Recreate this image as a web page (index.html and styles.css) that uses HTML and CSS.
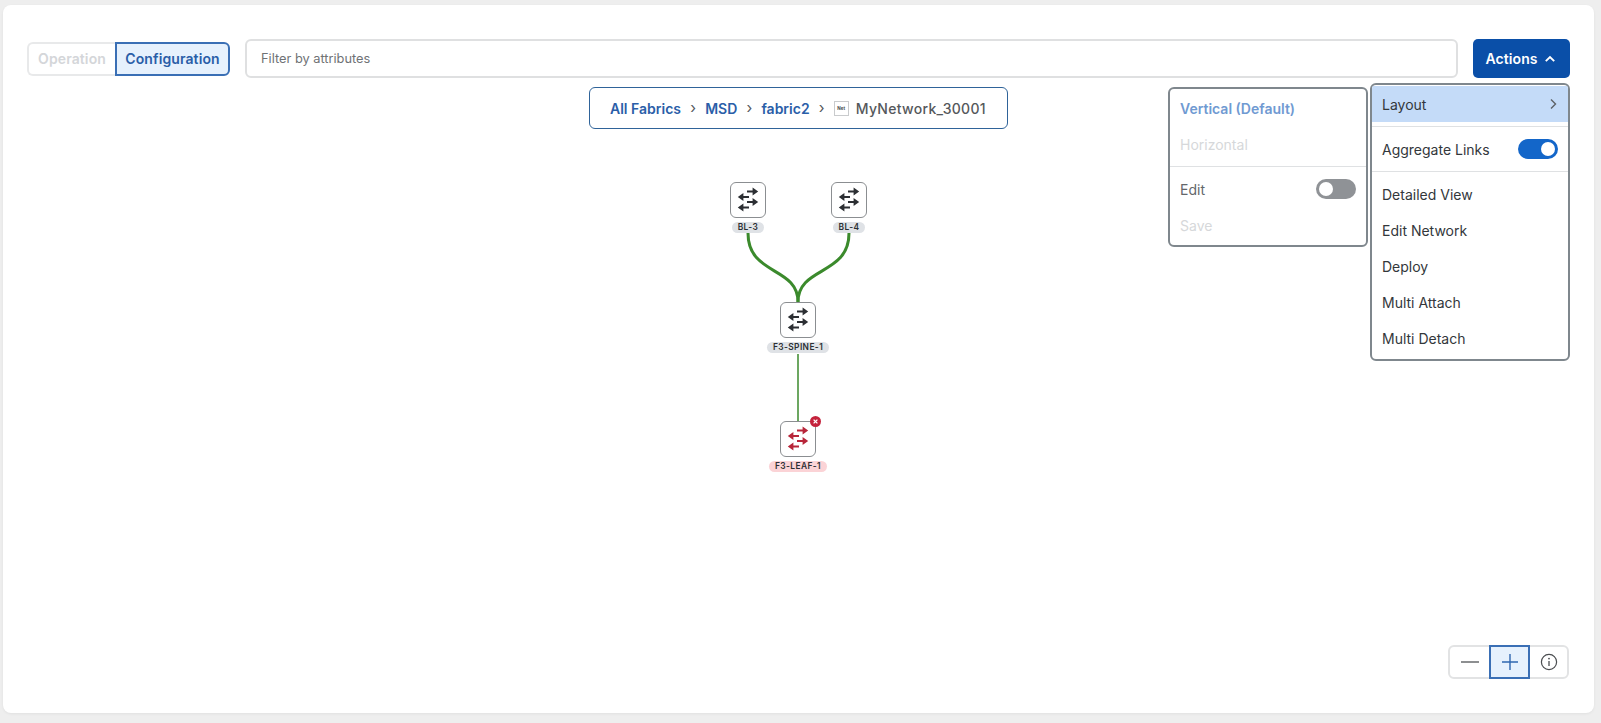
FILE: index.html
```html
<!DOCTYPE html>
<html lang="en">
<head>
<meta charset="utf-8">
<title>MyNetwork_30001</title>
<link rel="stylesheet" href="styles.css">
</head>
<body>
<svg class="defs" width="0" height="0" aria-hidden="true">
  <symbol id="sw" viewBox="0 0 36 36">
    <path d="M17 9.5h7M19 15h-7M17 20h7M19 25.5h-7" fill="none" stroke="currentColor" stroke-width="2.1"/>
    <path d="M22.6 5.4l5.6 4.1-5.6 4.1zM13.4 10.9L7.8 15l5.6 4.1zM22.6 15.9l5.6 4.1-5.6 4.1zM13.4 21.4l-5.6 4.1 5.6 4.1z" fill="currentColor"/>
  </symbol>
</svg>
<main class="panel">
  <header class="toolbar">
    <div class="segment">
      <button class="seg seg-off">Operation</button>
      <button class="seg seg-on">Configuration</button>
    </div>
    <div class="filter">Filter by attributes</div>
    <button class="actions">Actions
      <svg class="caret" width="12" height="12" viewBox="0 0 12 12"><path d="M1.8 8.2L6 4l4.2 4.2" fill="none" stroke="#fff" stroke-width="1.9"/></svg>
    </button>
  </header>
  <section class="canvas">
    <nav class="crumbs">
      <a>All Fabrics</a><span class="sep">›</span><a>MSD</a><span class="sep">›</span><a>fabric2</a><span class="sep">›</span>
      <span class="net">Net</span><span class="current">MyNetwork_30001</span>
    </nav>

    <svg class="edges" width="1601" height="723" viewBox="0 0 1601 723">
      <path class="thick" d="M748 233C748 276 798 266 798 302"/>
      <path class="thick" d="M849 233C849 276 798 266 798 302"/>
      <path class="thin" d="M798 354V422"/>
    </svg>

    <div class="node n-bl3"><div class="box"><svg width="36" height="36"><use href="#sw"/></svg></div><span class="tag">BL-3</span></div>
    <div class="node n-bl4"><div class="box"><svg width="36" height="36"><use href="#sw"/></svg></div><span class="tag">BL-4</span></div>
    <div class="node n-spine"><div class="box"><svg width="36" height="36"><use href="#sw"/></svg></div><span class="tag">F3-SPINE-1</span></div>
    <div class="node n-leaf err"><div class="box"><svg width="36" height="36"><use href="#sw"/></svg>
      <svg class="badge" width="11" height="11" viewBox="0 0 11 11"><circle cx="5.5" cy="5.5" r="5.5" fill="#c4233c"/><path d="M3.6 3.6l3.8 3.8M7.4 3.6l-3.8 3.8" stroke="#fff" stroke-width="1.3"/></svg></div><span class="tag">F3-LEAF-1</span></div>

    <div class="zoomctl">
      <button class="zbtn"><svg width="20" height="20" viewBox="0 0 20 20"><path d="M1 10h18" stroke="#5c5f62" stroke-width="1.4"/></svg></button>
      <button class="zbtn zon"><svg width="20" height="20" viewBox="0 0 20 20"><path d="M2 10h16M10 2v16" stroke="#2f67b0" stroke-width="1.4"/></svg></button>
      <button class="zbtn"><svg width="18" height="18" viewBox="0 0 18 18"><circle cx="9" cy="9" r="7.6" fill="none" stroke="#4a4d50" stroke-width="1.2"/><path d="M9 8v5" stroke="#4a4d50" stroke-width="1.3"/><circle cx="9" cy="5.6" r=".9" fill="#4a4d50"/></svg></button>
    </div>
  </section>

  <aside class="menu sub">
    <div class="item picked">Vertical (Default)</div>
    <div class="item faint">Horizontal</div>
    <hr class="rule rule-sub">
    <div class="item dim">Edit<span class="switch off"></span></div>
    <div class="item faint">Save</div>
  </aside>
  <aside class="menu main-menu">
    <div class="item active">Layout
      <svg width="10" height="12" viewBox="0 0 10 12"><path d="M3 1.5L7.5 6 3 10.5" fill="none" stroke="#5c6166" stroke-width="1.4"/></svg>
    </div>
    <hr class="rule">
    <div class="item">Aggregate Links<span class="switch on"></span></div>
    <hr class="rule">
    <div class="item">Detailed View</div>
    <div class="item">Edit Network</div>
    <div class="item">Deploy</div>
    <div class="item">Multi Attach</div>
    <div class="item">Multi Detach</div>
  </aside>
</main>
</body>
</html>
```
FILE: styles.css
```css
* { box-sizing: border-box; }
html, body { margin: 0; height: 100%; }
body {
  background: #eeeeee;
  padding: 5px 7px 10px 3px;
  font-family: Inter, "Liberation Sans", sans-serif;
  font-size: 14px;
  color: #2b2f33;
  overflow: hidden;
}
.defs { position: absolute; }
button { font-family: inherit; margin: 0; padding: 0; cursor: pointer; }

.panel {
  position: relative;
  height: 708px;
  background: #fff;
  border-radius: 8px;
  box-shadow: 0 1px 3px rgba(0, 0, 0, 0.06);
  display: flex;
  flex-direction: column;
}

.toolbar {
  display: flex;
  align-items: center;
  padding: 34px 24px 0 24px;
  height: 73px;
}
.segment { display: flex; height: 34px; }
.seg { font-size: 14px; font-weight: 600; height: 34px; background: #fff; letter-spacing: 0.1px; }
.seg-off {
  width: 88px;
  color: #d4d6d9;
  border: 2px solid #e8e9ea;
  border-right: 0;
  border-radius: 6px 0 0 6px;
}
.seg-on {
  width: 115px;
  color: #2a5ea8;
  background: #e6f1fd;
  border: 2px solid #3a6fb5;
  border-radius: 0 6px 6px 0;
}
.filter {
  flex: 1;
  height: 39px;
  margin: 0 15px 0 15px;
  border: 2px solid #dfe0e1;
  border-radius: 6px;
  padding-left: 14px;
  display: flex;
  align-items: center;
  font-size: 12.8px;
  color: #6f7275;
}
.actions {
  width: 97px;
  height: 39px;
  background: #0a4fa8;
  color: #fff;
  border: 0;
  border-radius: 5px;
  font-size: 14px;
  font-weight: 600;
  letter-spacing: 0.1px;
  display: flex;
  align-items: center;
  justify-content: center;
  gap: 6px;
  padding-right: 2px;
}

.canvas { position: relative; flex: 1; display: flex; flex-direction: column; align-items: center; padding-top: 9px; }
.crumbs {
  width: 419px;
  height: 42px;
  border: 1px solid #2f6399;
  border-radius: 6px;
  display: flex;
  align-items: center;
  justify-content: flex-start;
  padding-left: 20px;
  font-size: 14px;
  background: #fff;
  position: relative;
  z-index: 1;
}
.crumbs a { color: #2a5ea8; font-weight: 600; }
.sep { color: #55595d; margin: 0 9.2px; font-size: 15px; line-height: 14px; }
.net {
  width: 15px;
  height: 15px;
  border: 1px solid #c9cbcd;
  font-size: 4.5px;
  font-weight: 700;
  display: flex;
  align-items: center;
  justify-content: center;
  margin-right: 7px;
  color: #44484c;
}
.current { color: #55585b; font-weight: 500; letter-spacing: 0.3px; }

.edges { position: absolute; left: -3px; top: -78px; pointer-events: none; }
.edges path { fill: none; stroke: #3b8a2c; }
.thick { stroke-width: 3; }
.thin { stroke-width: 1.5; }

.node {
  position: absolute;
  width: 80px;
  display: flex;
  flex-direction: column;
  align-items: center;
  gap: 4px;
}
.n-bl3 { left: 705px; top: 104px; }
.n-bl4 { left: 806px; top: 104px; }
.n-spine { left: 755px; top: 224px; }
.n-leaf { left: 755px; top: 343px; }
.box {
  position: relative;
  width: 36px;
  height: 36px;
  background: #fff;
  border: 1px solid #8b8e91;
  border-radius: 6px;
  color: #2c2f33;
}
.box > svg:first-child { display: block; margin: -1px; }
.tag {
  font-size: 8.4px;
  font-weight: 600;
  line-height: 11px;
  height: 11px;
  padding: 0 6px;
  background: #dfe2e6;
  border-radius: 6px;
  color: #2c2f33;
  letter-spacing: 0.4px;
  white-space: nowrap;
}
.err .box { color: #b8263a; }
.err .tag { background: #fbd3d6; }
.badge { position: absolute; right: -6px; top: -6px; }

.zoomctl {
  position: absolute;
  right: 25px;
  bottom: 34px;
  display: flex;
  height: 34px;
  width: 121px;
  border: 2px solid #e2e3e4;
  border-radius: 6px;
  background: #fff;
}
.zbtn { flex: 1; background: none; border: 0; display: flex; align-items: center; justify-content: center; }
.zbtn:first-child { flex: none; width: 39px; }
.zon {
  flex: none;
  width: 41px;
  height: 34px;
  margin-top: -2px;
  background: #e6f1fd;
  border: 2px solid #3a6fb5;
}

.menu {
  position: absolute;
  background: #fff;
  border: 2px solid #7f878d;
  border-radius: 6px;
}
.sub { left: 1165px; top: 82px; width: 200px; height: 160px; padding-top: 1px; }
.main-menu { left: 1367px; top: 78px; width: 200px; height: 278px; padding-top: 1px; overflow: hidden; }
.item {
  height: 36px;
  padding: 0 10px;
  display: flex;
  align-items: center;
  justify-content: space-between;
  font-size: 14px;
  color: #33373b;
}
.active { background: #c4dbf8; }
.picked { color: #709ad2; font-weight: 600; }
.faint { color: #d6d8da; }
.dim { color: #63676b; }
.rule { border: 0; border-top: 1px solid #dfe1e3; margin: 4px 0 4px; height: 0; }
.rule-sub { margin: 4px 0 4px; }
.switch { position: relative; width: 40px; height: 20px; border-radius: 10px; }
.switch::after {
  content: "";
  position: absolute;
  top: 3px;
  width: 14px;
  height: 14px;
  border-radius: 50%;
  background: #fff;
}
.on { background: #1366c9; }
.on::after { right: 3px; }
.off { background: #8f9296; }
.off::after { left: 3px; }
```
